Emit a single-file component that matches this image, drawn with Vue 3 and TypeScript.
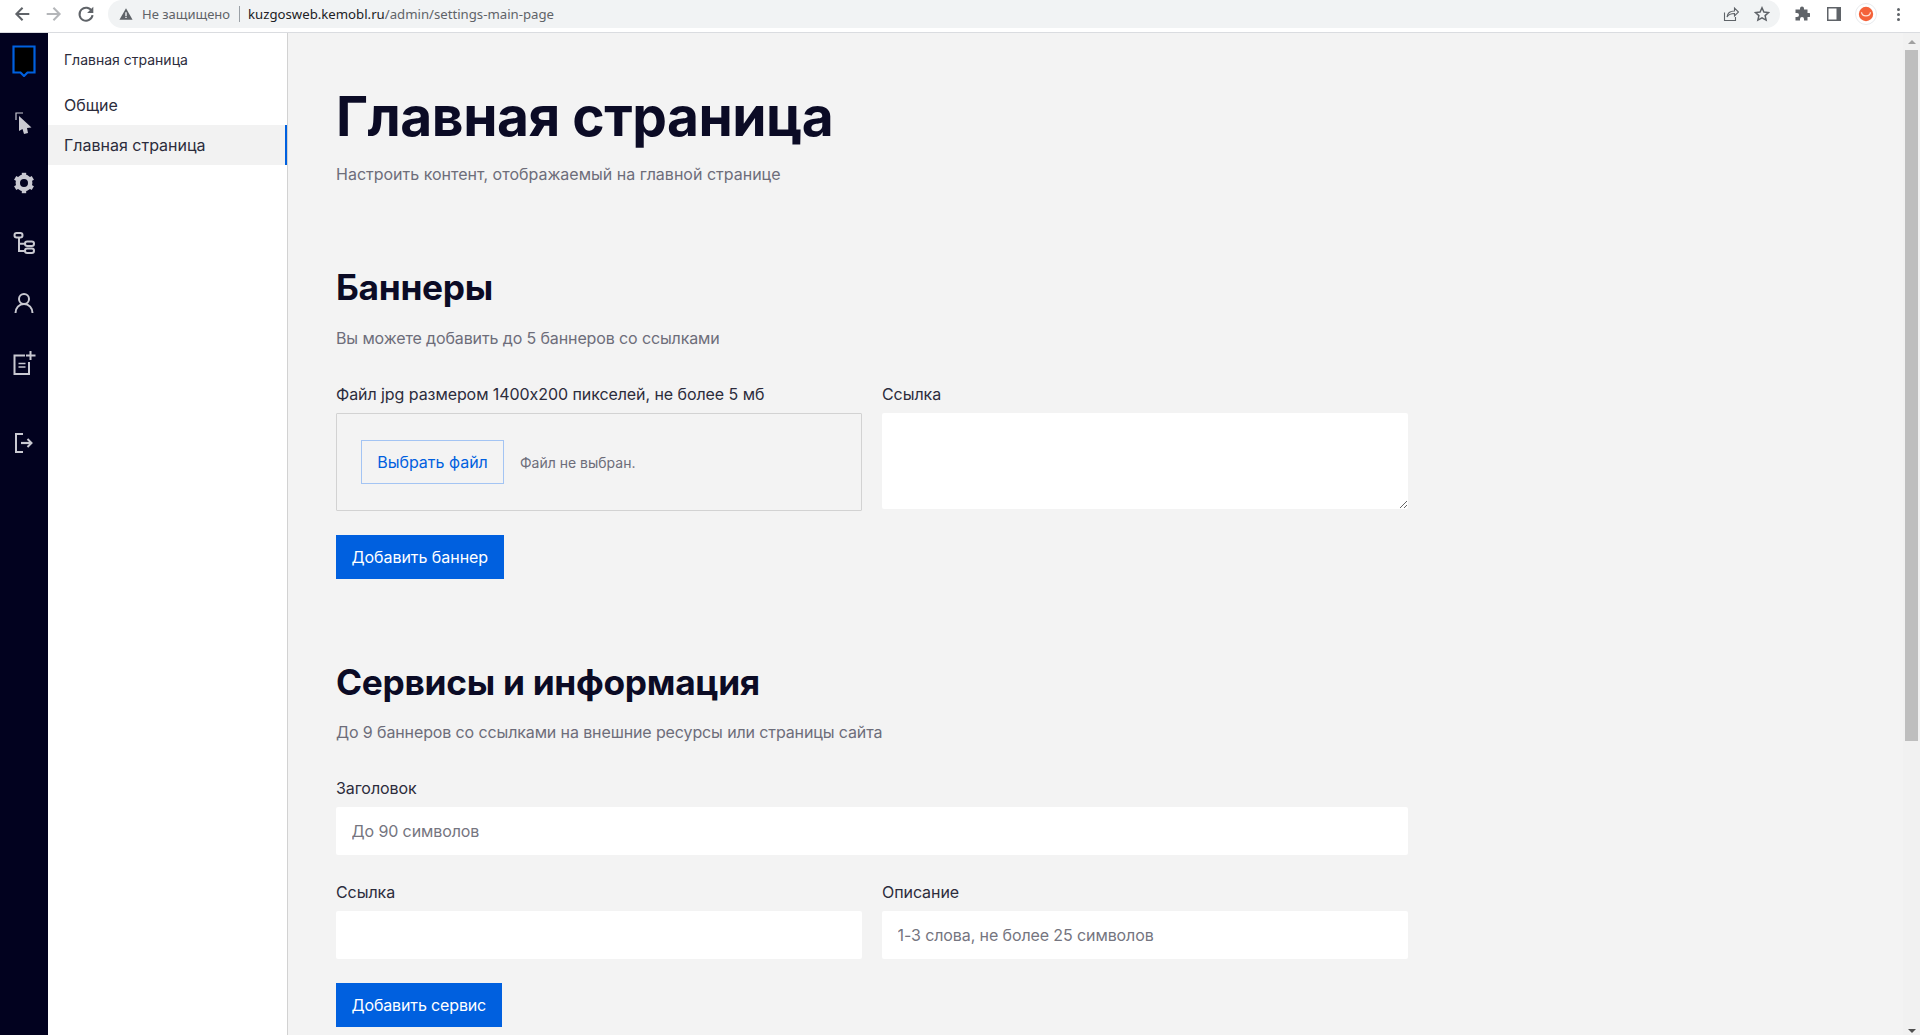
<template>
  <div class="window">
    <header class="chrome">
      <div class="nav-btns">
        <svg class="ico" viewBox="0 0 16 16"><path d="M14.500 8H3M8.500 2.500 3 8l5.500 5.500" fill="none" stroke="#5f6368" stroke-width="1.800" /></svg>
        <svg class="ico" viewBox="0 0 16 16"><path d="M1.500 8H13M7.500 2.500 13 8l-5.500 5.500" fill="none" stroke="#b4b6b9" stroke-width="1.800" /></svg>
        <svg class="ico" viewBox="0 0 16 16"><path d="M13.200 5.500A5.800 5.800 0 1 0 13.800 9" fill="none" stroke="#5f6368" stroke-width="1.800" /><path d="M14.500 1.500v5.500H9z" fill="#5f6368" /></svg>
      </div>
      <div class="omnibox">
        <svg class="warn" viewBox="0 0 16 16"><path d="M8 1.500 15.500 14.500H.5z" fill="#5f6368" /><path d="M7.200 6h1.600v4.300H7.200zM7.200 11h1.600v1.600H7.200z" fill="#f1f3f4" /></svg>
        <span class="insecure">Не защищено</span>
        <span class="sep"></span>
        <span class="url"><b>kuzgosweb.kemobl.ru</b>/admin/settings-main-page</span>
        <svg class="ico-sm share" viewBox="0 0 16 16"><path d="M1.500 6.500v8h11V11M4 11c.5-4 3.500-6 7.500-6V2l4 4-4 4V7.500C8 7.500 5.500 8.500 4 11z" fill="none" stroke="#5f6368" stroke-width="1.100" /></svg>
        <svg class="ico-sm star" viewBox="0 0 16 16"><path d="m8 1.800 1.900 4.200 4.600.5-3.400 3.100 1 4.500L8 11.800l-4.100 2.300 1-4.500L1.500 6.500l4.600-.5z" fill="none" stroke="#5f6368" stroke-width="1.500" /></svg>
      </div>
      <div class="tools">
        <svg class="ico-sm" viewBox="0 0 16 16"><path d="M6 2.500a2 2 0 0 1 4 0V3.500h3.500V7H15a2 2 0 0 1 0 4h-1.500v3.500H10V13a2 2 0 0 0-4 0v1.500H1.500V11H3a2 2 0 0 0 0-4H1.500V3.500H6z" fill="#5f6368" /></svg>
        <svg class="ico-sm" viewBox="0 0 16 16"><path d="M1 1h14v14H1z" fill="#5f6368" /><path d="M2.500 2.500h8v11h-8z" fill="#fff" /></svg>
        <span class="avatar">
          <svg viewBox="0 0 22 22"><circle cx="11" cy="11" r="10.500" fill="#fff" stroke="#e8eaed" /><circle cx="11" cy="11" r="7.200" fill="#f4623a" /><path d="M6.500 9.300c.5 4.800 8.500 4.800 9 0" fill="none" stroke="#ffe1d6" stroke-width="1.300" /></svg>
        </span>
        <span class="dots"><i></i><i></i><i></i></span>
      </div>
    </header>

    <div class="page">
      <nav class="rail">
        <svg class="logo" viewBox="0 0 24 32"><path d="M1.500 1.500h21v26h-7L12 31l-3.500-3.500H1.500z" fill="#000" stroke="#0060df" stroke-width="2.200" /></svg>
        <svg class="rail-ico" viewBox="0 0 24 24"><path d="M4 10V3h7" fill="none" stroke="#c9c9d1" stroke-width="1.200" /><path d="M7 6l12.500 11.500-4.500.5 1 5-4 1-1.500-5L7 21z" fill="#c9c9d1" /></svg>
        <svg class="rail-ico" viewBox="0 0 24 24"><g fill="#c9c9d1"><rect v-for="deg in gearTeeth" :key="deg" x="9.800" y="1.800" width="4.400" height="5" :transform="`rotate(${deg} 12 12)`" /></g><circle cx="12" cy="12" r="6.200" fill="none" stroke="#c9c9d1" stroke-width="4.400" /></svg>
        <svg class="rail-ico" viewBox="0 0 24 24"><g fill="none" stroke="#c9c9d1" stroke-width="2"><rect x="2.500" y="2" width="8" height="4.500" rx="2.200" /><rect x="13" y="10.500" width="9" height="4.500" rx="2.200" /><rect x="13" y="17.500" width="9" height="4.500" rx="2.200" /><path d="M7 6.500v13.500h6M7 12.700h6" /></g></svg>
        <svg class="rail-ico" viewBox="0 0 24 24"><g fill="none" stroke="#c9c9d1" stroke-width="2"><circle cx="12" cy="8" r="5" /><path d="M3.500 22c0-5 3.500-9 8.500-9s8.500 4 8.500 9" /></g></svg>
        <svg class="rail-ico" viewBox="0 0 24 24"><g fill="none" stroke="#c9c9d1" stroke-width="2"><path d="M13 4.500H2.500V23h14.500V11" /><path d="M18.500 0v9M14 4.500h9.500" /></g><path d="M6.500 12.500h7M6.500 16h7" stroke="#c9c9d1" stroke-width="1.500" /></svg>
        <svg class="rail-ico last" viewBox="0 0 24 24"><g fill="none" stroke="#c9c9d1" stroke-width="2"><path d="M11 3H4v18h7" /><path d="M9 12h10" stroke-width="2.200" /><path d="m15.500 8 4 4-4 4" /></g></svg>
      </nav>

      <aside class="side">
        <div class="side-title">Главная страница</div>
        <ul class="side-list">
          <li v-for="item in sideItems" :key="item" class="side-link" :class="{ active: item === activeItem }">{{ item }}</li>
        </ul>
      </aside>

      <main class="main">
        <h1>Главная страница</h1>
        <p class="lead">Настроить контент, отображаемый на главной странице</p>

        <section class="banners">
          <h2>Баннеры</h2>
          <p class="hint">Вы можете добавить до 5 баннеров со ссылками</p>
          <div class="row">
            <div class="field">
              <label>Файл jpg размером 1400x200 пикселей, не более 5 мб</label>
              <div class="file-box">
                <button class="file-btn" type="button">Выбрать файл</button>
                <span class="file-name">Файл не выбран.</span>
              </div>
            </div>
            <div class="field">
              <label>Ссылка</label>
              <textarea class="area"></textarea>
            </div>
          </div>
          <button class="primary" type="button">Добавить баннер</button>
        </section>

        <section class="services">
          <h2>Сервисы и информация</h2>
          <p class="hint">До 9 баннеров со ссылками на внешние ресурсы или страницы сайта</p>
          <div class="field wide">
            <label>Заголовок</label>
            <input class="input" placeholder="До 90 символов" />
          </div>
          <div class="row">
            <div class="field">
              <label>Ссылка</label>
              <input class="input" />
            </div>
            <div class="field">
              <label>Описание</label>
              <input class="input" placeholder="1-3 слова, не более 25 символов" />
            </div>
          </div>
          <button class="primary tight" type="button">Добавить сервис</button>
        </section>
      </main>

      <div class="scrollbar">
        <span class="arrow up"></span>
        <span class="thumb"></span>
        <span class="arrow down"></span>
      </div>
    </div>
  </div>
</template>

<script setup lang="ts">
const sideItems: string[] = ['Общие', 'Главная страница']
const activeItem = 'Главная страница'
const gearTeeth: number[] = [0, 60, 120, 180, 240, 300]
</script>

<style>
html,
body {
  margin: 0;
  height: 100%;
  overflow: hidden;
}
</style>

<style scoped>
.window {
  display: flex;
  flex-direction: column;
  width: 1920px;
  height: 1035px;
  overflow: hidden;
  font-family: Inter, "Noto Sans", sans-serif;
  color: #0b0b25;
}

.chrome {
  display: flex;
  align-items: flex-start;
  flex-shrink: 0;
  height: 33px;
  background: #fff;
  border-bottom: 1px solid #dadce0;
  box-sizing: border-box;
  font-family: "Noto Sans", "Open Sans", sans-serif;
}

.nav-btns {
  display: flex;
  align-items: center;
  flex-shrink: 0;
  gap: 14px;
  width: 108px;
  height: 28px;
  padding-left: 13px;
  box-sizing: border-box;
}

.ico {
  width: 18px;
  height: 18px;
}

.omnibox {
  display: flex;
  align-items: center;
  flex-shrink: 0;
  width: 1672px;
  height: 28px;
  background: #f1f3f4;
  border-radius: 14px;
  font-size: 13px;
  color: #5f6368;
}

.warn {
  width: 14px;
  height: 14px;
  margin-left: 11px;
}

.insecure {
  margin-left: 9px;
}

.sep {
  width: 1px;
  height: 16px;
  margin: 0 8px 0 9px;
  background: #9aa0a6;
}

.url {
  flex: 1;
  font-size: 13.2px;
}

.url b {
  font-weight: 400;
  color: #202124;
}

.ico-sm {
  width: 16px;
  height: 16px;
}

.share {
  margin-right: 15px;
}

.star {
  margin-right: 10px;
}

.tools {
  display: flex;
  align-items: center;
  gap: 16px;
  height: 28px;
  padding-left: 14px;
}

.avatar {
  display: flex;
  width: 22px;
  height: 22px;
  margin: 0 -3px;
}

.dots {
  display: flex;
  flex-direction: column;
  align-items: center;
  gap: 2px;
  width: 16px;
}

.dots i {
  width: 3px;
  height: 3px;
  border-radius: 50%;
  background: #5f6368;
}

.page {
  display: flex;
  flex: 1;
  min-height: 0;
}

.rail {
  display: flex;
  flex-direction: column;
  align-items: center;
  flex-shrink: 0;
  width: 48px;
  padding-top: 12px;
  box-sizing: border-box;
  background: #02021f;
}

.logo {
  width: 24px;
  height: 32px;
}

.rail-ico {
  width: 24px;
  height: 24px;
  margin-top: 36px;
}

.rail-ico:nth-child(2) {
  margin-top: 33px;
}

.rail-ico:nth-child(3) {
  margin-top: 37px;
}

.rail-ico.last {
  margin-top: 56px;
}

.side {
  flex-shrink: 0;
  width: 240px;
  background: #fff;
  border-right: 1px solid #d2d2d2;
  box-sizing: border-box;
  color: #2c2c3c;
}

.side-title {
  padding: 17px 16px 0;
  font-size: 14px;
  line-height: 20px;
}

.side-list {
  list-style: none;
  margin: 15px 0 0;
  padding: 0;
}

.side-link {
  height: 40px;
  padding: 0 16px;
  font-size: 16px;
  line-height: 40px;
  box-sizing: border-box;
}

.side-link.active {
  background: #f2f2f2;
  border-right: 2px solid #0060df;
}

.main {
  flex: 1;
  min-width: 0;
  padding: 47px 0 0 48px;
  background: #f3f3f3;
}

h1 {
  margin: 0;
  font-size: 55.1px;
  line-height: 72px;
  font-weight: 700;
  letter-spacing: -0.5px;
}

.lead,
.hint {
  margin: 0;
  font-size: 16px;
  line-height: 24px;
  color: #6d6d7a;
}

.lead {
  margin-top: 10px;
}

.banners {
  margin-top: 80px;
}

.services {
  margin-top: 82px;
}

h2 {
  margin: 0;
  font-size: 35.3px;
  line-height: 44px;
  font-weight: 700;
  letter-spacing: -0.3px;
}

.hint {
  margin-top: 16px;
  letter-spacing: -0.12px;
}

.services .hint {
  margin-top: 15px;
}

.row {
  display: grid;
  grid-template-columns: 526px 526px;
  gap: 20px;
}

.banners .row {
  margin-top: 32px;
}

.services .row {
  margin-top: 25px;
}

.field {
  display: flex;
  flex-direction: column;
}

.field.wide {
  width: 1072px;
  margin-top: 32px;
}

label {
  font-size: 16px;
  line-height: 24px;
  margin-bottom: 7px;
  letter-spacing: -0.07px;
  color: #2c2c3c;
}

.file-box {
  display: flex;
  align-items: center;
  height: 98px;
  padding: 0 24px;
  border: 1px solid #d2d2d2;
  border-radius: 1px;
  box-sizing: border-box;
}

.file-btn {
  height: 44px;
  width: 143px;
  padding: 0;
  background: transparent;
  border: 1px solid #a3c4f3;
  color: #0060df;
  font: inherit;
  font-size: 16px;
}

.file-name {
  margin-left: 16px;
  font-size: 14px;
  color: #6d6d7a;
}

.area {
  display: block;
  height: 96px;
  padding: 0;
  border: 0;
  border-radius: 2px;
  background: #fff;
  box-sizing: border-box;
}

.input {
  height: 48px;
  padding: 0 15.5px;
  border: 0;
  border-radius: 2px;
  background: #fff;
  font: inherit;
  font-size: 16px;
  letter-spacing: -0.1px;
  box-sizing: border-box;
}

.input::placeholder {
  color: #757580;
  opacity: 1;
}

.primary {
  display: block;
  height: 44px;
  margin-top: 24px;
  padding: 0 15.5px;
  border: 0;
  background: #0060df;
  color: #fff;
  font: inherit;
  font-size: 16px;
  letter-spacing: -0.05px;
}

.primary.tight {
  letter-spacing: -0.14px;
}

.scrollbar {
  display: flex;
  flex-direction: column;
  align-items: center;
  flex-shrink: 0;
  width: 17px;
  background: #f1f1f1;
  box-sizing: border-box;
}

.thumb {
  width: 13px;
  height: 691px;
  margin-top: 6px;
  background: #bebebe;
}

.arrow {
  width: 0;
  height: 0;
  border-left: 4px solid transparent;
  border-right: 4px solid transparent;
}

.arrow.up {
  margin-top: 7px;
  border-bottom: 4px solid #a0a0a0;
}

.arrow.down {
  margin-top: auto;
  margin-bottom: 2px;
  border-top: 4px solid #505050;
}
</style>
